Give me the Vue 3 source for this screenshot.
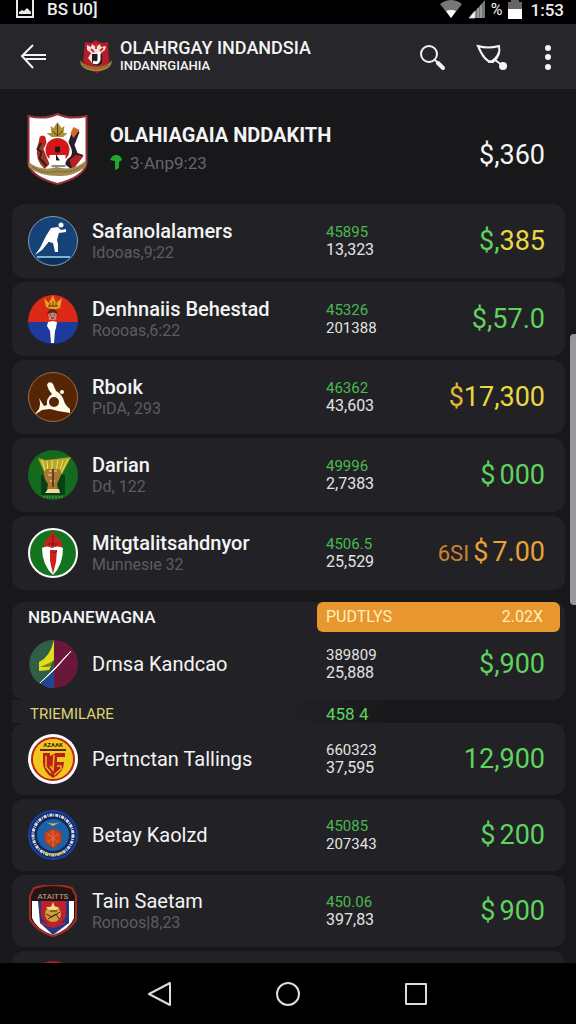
<script setup>
import { ref } from "vue";

const clubs = ref([
  { icon: "skater", name: "Safanolalamers", sub: "Idooas,9;22", top: "45895", bottom: "13,323", symbol: "$,", symbolTone: "green", value: "385", tone: "yellow" },
  { icon: "crown", name: "Denhnaiis Behestad", sub: "Roooas,6:22", top: "45326", bottom: "201388", symbol: "$,", value: "57.0", tone: "green" },
  { icon: "knot", name: "Rboık", sub: "PıDA, 293", top: "46362", bottom: "43,603", symbol: "$", symbolTone: "gold", value: "17,300", tone: "yellow" },
  { icon: "trophy", name: "Darian", sub: "Dd, 122", top: "49996", bottom: "2,7383", symbol: "$", value: "000", tone: "green", spaced: true },
  { icon: "torch", name: "Mitgtalitsahdnyor", sub: "Munnesıe 32", top: "4506.5", bottom: "25,529", prefix: "6SI", symbol: "$", value: "7.00", tone: "orange", spaced: true },
]);

const featured = ref({ icon: "split", name: "Dɾnsa Kandcao", top: "389809", plainTop: true, bottom: "25,888", symbol: "$,", value: "900", tone: "green" });

const league = ref([
  { icon: "shieldRound", crestText: "AZAAK", name: "Pertnctan Tallings", top: "660323", plainTop: true, bottom: "37,595", value: "12,900", tone: "green" },
  { icon: "seal", name: "Betay Kaolzd", top: "45085", bottom: "207343", symbol: "$", value: "200", tone: "green", spaced: true },
  { icon: "badge", crestText: "ATAITTS", name: "Tain Saetam", sub: "Ronoos|8,23", top: "450.06", bottom: "397,83", symbol: "$", value: "900", tone: "green", spaced: true },
]);

const groups = [
  { id: "clubs", rows: clubs.value },
  { id: "featured", rows: [featured.value] },
  { id: "league", rows: league.value },
];
</script>

<template>
  <div class="screen">
    <svg class="sprite" aria-hidden="true">
      <symbol id="skater" viewBox="0 0 50 50">
        <circle cx="25" cy="25" r="24.5" fill="#154378" stroke="#8299b4" />
        <path d="M10 41h31l-4 4q-12 7-23 0z" fill="#0d315f" />
        <path d="M9 41h33" stroke="#a9dcf4" stroke-width="1.5" />
        <circle cx="33" cy="9" r="2.5" fill="#fff" />
        <path d="M23 12l7-1 3 3 5-1v3l-7 1-2 7 1 4v8h-3l-2-9-4-1-7 8-7 5 5-7 6-12z" fill="#fff" />
        <path d="M21 26l-8 11" stroke="#154378" />
      </symbol>
      <symbol id="crown" viewBox="0 0 50 50">
        <path d="M0 28a25 27 0 0 1 50 0z" fill="#de2817" />
        <path d="M0 28h50a25 22 0 0 1-50 0z" fill="#1d3b9c" />
        <path d="M18 13l-2-9 5 5 4-8 3 8 6-5-2 10-7 2z" fill="#e3a51e" />
        <path d="M20 12h10M22 9v4M25 7v6M28 9v4" stroke="#77320f" />
        <circle cx="24.5" cy="20" r="5" fill="#5b241b" />
        <path d="M20 20q5-3 9 0l-1 6h-7z" fill="#cb8067" />
        <path d="M22 21h1M26 21h1M23 24h3" stroke="#541c16" />
        <path d="M20 28l5-1 4 1-1 6-1 3-1 12h-3l-1-12-3-5z" fill="#fff" />
      </symbol>
      <symbol id="knot" viewBox="0 0 50 50">
        <circle cx="25" cy="25" r="24.5" fill="#562506" stroke="#a36c38" />
        <path d="M20 11q3-2 5 1l3 7q6 3 8 10 1 4 6 8v4l-12-2-8-2-8 1-6 4H7l4-5q2-5 0-11l5 8 3-1q-1-7 5-11-4-4-5-9z" fill="#fff9e9" />
        <circle cx="26" cy="30" r="5" fill="#562506" />
        <circle cx="34" cy="20" r="2" fill="#fff9e9" />
      </symbol>
      <symbol id="trophy" viewBox="0 0 50 50">
        <circle cx="25" cy="25" r="25" fill="#146b1d" />
        <path d="M13 25h24v20H13z" fill="#073f14" />
        <path d="M10 8l7 2 11-1 15-2-9 17H17z" fill="#b9a52a" />
        <path d="M14 10l4 13M19 11l1 12M24 10v13M30 10l-2 13M35 10l-4 13M40 9l-7 14" stroke="#eee774" />
        <path d="M18 19h12q4 0 3 6l-4 9 1 6h-11l1-6q-7-8-2-15z" fill="#a67831" />
        <path d="M21 21h8M20 25h5M22 31h5" stroke="#f4d9a2" />
        <path d="M25 19v18" stroke="#60401c" stroke-width="2" />
        <path d="M20 39h11l1 4H17z" fill="#f4d9a2" />
        <path d="M15 47h20" stroke="#63a451" stroke-dasharray="2 1" />
      </symbol>
      <symbol id="torch" viewBox="0 0 50 50">
        <circle cx="25" cy="25" r="24" fill="#14731e" stroke="#fff" stroke-width="2" />
        <path d="M25 2q0 5 5 8 5 4 4 10H16q-1-7 5-11z" fill="#c7211c" />
        <path d="M14 20q5-3 10 0 6-3 11 0 0 17-10 27-11-10-11-27z" fill="#fff" />
        <path d="M22 22h7l-1 12-3 12-3-13z" fill="#ce211c" />
        <path d="M25 6v12M20 16h10M24 23l2 2 3-2" stroke="#7c1514" fill="none" />
      </symbol>
      <symbol id="split" viewBox="0 0 50 50">
        <path d="M26 1A24 24 0 0 1 26 49z" fill="#6b173c" />
        <path d="M26 1A24 24 0 0 0 12 45L26 31z" fill="#315e47" />
        <path d="M12 44l14-14v19q-7 1-14-5z" fill="#22478e" />
        <path d="M26 1v20l-6 5 3 1-2 4-10 1V23q11-5 15-22z" fill="#e3dc1b" />
        <path d="M12 28l14-6-5 6z" fill="#778718" />
        <path d="M43 12L26 30 12 44l16-15z" fill="#fff" stroke="#fff" />
      </symbol>
      <symbol id="shieldRound" viewBox="0 0 50 50">
        <ellipse cx="25" cy="25" rx="25" ry="25" fill="#fff" />
        <circle cx="25" cy="25" r="21" fill="#f2c61c" stroke="#b82719" stroke-width="2" />
        <path d="M12 16h26" stroke="#592815" stroke-width="2" />
        <path d="M15 19h7v3l6-3h9v4h-8v5h7q0 10-11 16-10-6-10-16z" fill="#b52118" />
        <path d="M18 22v11l5 6M22 32l3 4 1-15M29 32h4v3l-7 6" stroke="#f2b51c" stroke-width="1.5" fill="none" />
      </symbol>
      <symbol id="seal" viewBox="0 0 50 50">
        <circle cx="25" cy="25" r="24" fill="#142b67" stroke="#19409c" stroke-width="2" />
        <circle cx="25" cy="25" r="20" fill="none" stroke="#d6dce3" stroke-width="3" stroke-dasharray="3 1 1 1" />
        <circle cx="25" cy="25" r="17" fill="#1c61a8" stroke="#132758" stroke-width="2" />
        <path d="M18 12q7 3 14 0l-7 4z" fill="#d4bd61" />
        <path d="M14 41q11 7 23 0" stroke="#c8b55e" stroke-width="2" fill="none" />
        <path d="M25 16v4M17 23q8-7 16 0v9l-8 6-8-6z" stroke="#a9391b" fill="#c84420" />
        <path d="M25 20v17M20 24l10 8M30 24l-10 8" stroke="#e97132" />
      </symbol>
      <symbol id="badge" viewBox="0 0 50 52">
        <path d="M6 3q19-6 38 0l4 8v23q-5 11-23 17Q7 45 2 34V11z" fill="#251414" stroke="#a22c21" stroke-width="2" />
        <path d="M4 16h42v17q-4 11-21 17Q8 44 4 33z" fill="#fff" />
        <path d="M10 16h31v22L25 50 12 38z" fill="#263687" />
        <path d="M13 16h25v15q-3 8-13 11-9-4-12-11z" fill="#bc202a" />
        <circle cx="25" cy="29" r="8" fill="#cda03a" />
        <path d="M25 17l2 5h4l-3 3h-7l-3-3h5z" fill="#f0da87" />
        <path d="M18 29l6 3 8-5M20 34l8-5 3 5M22 26h7" stroke="#3d2819" fill="none" />
        <path d="M13 38l12 4 12-4" stroke="#bc202a" stroke-width="2" fill="none" />
      </symbol>
      <symbol id="crest" viewBox="0 0 60 72">
        <path d="M1 3q17 4 29-2 12 6 29 2v48q-3 13-29 20Q4 64 1 51z" fill="#fff" stroke="#96313a" stroke-width="2" />
        <path d="M23 13l3 2 4-6 4 6 3-2-1 7h4l-4 4H24l-5-4h5z" fill="#ae9137" />
        <path d="M25 18l5 5 5-5M30 11v12" stroke="#533d1c" fill="none" />
        <circle cx="30" cy="37" r="12" fill="#d4151a" />
        <path d="M12 26q6-6 7 4l-3 6 6 15-5 5q-10-9-7-23z" fill="#9d3426" />
        <path d="M14 30l-4 6 4 3-2 6 7 8" stroke="#351e18" stroke-width="2" fill="none" />
        <path d="M12 24q3-3 6 0v5h-6z" fill="#d4151a" />
        <path d="M44 20l3-5 5 4-5 13 3 8 6 2-11 15-8-6 3-5q6-3 4-10l-3-7z" fill="#262026" />
        <path d="M43 20l3-6 6 3-6 8z" fill="#d2682b" />
        <path d="M42 47l6-5 8 1-11 14z" fill="#b62024" />
        <path d="M22 42h16v12H22z" fill="#fff" />
        <path d="M28 34h4v5h-4zM29 42v5h3M24 53h14" stroke="#251717" fill="#251717" />
        <path d="M1 49q13 10 28 5 17 5 30-7l-1 7q-13 10-27 9Q11 63 1 54z" fill="#a08a4d" />
        <path d="M5 54q13 8 24 4 14 3 26-5" stroke="#67582e" stroke-dasharray="2 1" fill="none" />
      </symbol>
      <symbol id="miniCrest" viewBox="0 0 34 36">
        <path d="M6 3l6 1 3-2 2-1 3 2 3 1 6-1 1 20q-3 8-12 11Q7 31 4 22z" fill="#b51c25" />
        <path d="M8 6l4 2 1-3 4 3 4-3 1 3 5-1-1 4-4 3 1 6-3 4h-7l-4-5 3-5-4-3z" fill="#f3dddd" />
        <path d="M12 10l3 3M24 9l-3 3M17 5v5" stroke="#d52e2e" stroke-width="2" />
        <path d="M13 15h10v9q-5 5-10 0z" fill="#24191c" />
        <path d="M20 13v8q-1 4-6 2" stroke="#fff" stroke-width="3" fill="none" />
        <path d="M1 21q5 7 16 7t16-7l-1 5q-4 6-15 6T2 26z" fill="#a2803c" />
        <path d="M4 26q12 7 26 0" stroke="#67431f" stroke-dasharray="2 1" fill="none" />
      </symbol>
    </svg>

    <div class="status-bar">
      <svg class="status-photo" viewBox="0 0 18 20" aria-hidden="true">
        <path d="M1 0v17h16V0" fill="none" stroke="#e8e8e8" stroke-width="2" />
        <path d="M3 14v-2l3-2 2 1 3-3 4 4v2z" fill="#e8e8e8" />
      </svg>
      <span class="status-text">BS U0]</span>
      <svg class="status-wifi" viewBox="0 0 24 20" aria-hidden="true">
        <path d="M1 4q11-8 22 0L12 18z" fill="#777" />
        <path d="M7 11q5-2 10 0l-5 7z" fill="#fff" />
      </svg>
      <svg class="status-signal" viewBox="0 0 18 20" aria-hidden="true">
        <path d="M17 0v18H1z" fill="#777" />
        <path d="M7 11v7H1zM10 8v10M13 5v13" fill="#fff" stroke="#bbb" />
      </svg>
      <span class="status-rate">%</span>
      <svg class="status-battery" viewBox="0 0 14 20" aria-hidden="true">
        <path d="M3 0h8v2h3v7H0V2h3z" fill="#666" />
        <path d="M0 9h14v10H0z" fill="#fff" />
      </svg>
      <span class="status-time">1:53</span>
    </div>

    <header class="app-bar">
      <button class="icon-button back" aria-label="Back">
        <svg viewBox="0 0 28 28">
          <path d="M13 2L2 13l11 12M3 12h23M6 16h20" />
        </svg>
      </button>
      <svg class="app-logo" aria-hidden="true"><use href="#miniCrest" /></svg>
      <div class="app-title">
        <h1>OLAHRGAY INDANDSIA</h1>
        <p>INDANRGIAHIA</p>
      </div>
      <button class="icon-button" aria-label="Search">
        <svg viewBox="0 0 28 28">
          <circle cx="11" cy="11" r="8" />
          <path d="M17 17l8 8" />
          <path d="M20 20l5 5" class="thick" />
        </svg>
      </button>
      <button class="icon-button filter" aria-label="Filter">
        <svg viewBox="0 0 32 28">
          <path d="M2 3q10 3 21 0 2 10-6 16-8 1-15-16zM12 19q8-1 11-10M19 17l7 5" />
          <circle cx="27" cy="23" r="2" class="thick" />
        </svg>
      </button>
      <button class="icon-button more" aria-label="More">
        <svg viewBox="0 0 8 28">
          <circle cx="4" cy="5" r="3" class="dot" />
          <circle cx="4" cy="14" r="3" class="dot" />
          <circle cx="4" cy="24" r="3" class="dot" />
        </svg>
      </button>
    </header>

    <main class="content">
      <section class="profile">
        <svg class="profile-crest" aria-hidden="true"><use href="#crest" /></svg>
        <div class="profile-text">
          <h2>OLAHIAGAIA NDDAKITH</h2>
          <p>
            <svg viewBox="0 0 12 16" aria-hidden="true">
              <path d="M0 5q2-5 6-5 5 0 6 5L9 7v6l-4 2V6z" fill="#20a82e" />
            </svg>
            3·Anp9:23
          </p>
        </div>
        <strong class="profile-amount">$,360</strong>
      </section>

      <template v-for="group in groups" :key="group.id">
        <div v-if="group.id === 'league'" class="divider">
          <h3>TRIEMILARE</h3>
          <span>458 4</span>
        </div>
        <section :class="['group', group.id]">
          <div v-if="group.id === 'featured'" class="group-head">
            <h3>NBDANEWAGNA</h3>
            <div class="points">
              <span>PUDTLYS</span>
              <span>2.02X</span>
            </div>
          </div>
          <ul>
            <li v-for="row in group.rows" :key="row.name" class="row">
              <svg class="row-icon" viewBox="0 0 50 52" aria-hidden="true">
                <use :href="'#' + row.icon" />
                <text v-if="row.crestText" x="25" y="14" text-anchor="middle" :class="row.icon">{{ row.crestText }}</text>
              </svg>
              <div class="row-text">
                <p class="name">{{ row.name }}</p>
                <p v-if="row.sub" class="sub">{{ row.sub }}</p>
              </div>
              <div class="row-numbers">
                <div class="stats">
                  <p :class="row.plainTop ? 'plain' : 'green'">{{ row.top }}</p>
                  <p class="plain" :class="{ large: row.bottom.includes(',') }">{{ row.bottom }}</p>
                </div>
                <div class="amount" :class="[row.tone, { spaced: row.spaced }]">
                  <span v-if="row.prefix" class="prefix">{{ row.prefix }}</span>
                  <span v-if="row.symbol" :class="row.symbolTone">{{ row.symbol }}</span>
                  <span>{{ row.value }}</span>
                </div>
              </div>
            </li>
          </ul>
        </section>
      </template>
      <div class="next-card">
        <span class="next-icon"></span>
      </div>
      <div class="scrollbar"></div>
    </main>

    <nav class="nav-bar">
      <button aria-label="Back">
        <svg viewBox="0 0 26 26"><path d="M23 2v22L2 13z" /></svg>
      </button>
      <button aria-label="Home">
        <svg viewBox="0 0 26 26"><circle cx="13" cy="13" r="11" /></svg>
      </button>
      <button aria-label="Recent apps">
        <svg viewBox="0 0 26 26"><path d="M3 3h20v20H3z" /></svg>
      </button>
    </nav>
  </div>
</template>

<style>
body {
  margin: 0;
  background: #18181b;
}
</style>

<style scoped>
.screen {
  display: flex;
  flex-direction: column;
  height: 100vh;
  background: #18181b;
  color: #f4f4f4;
  font-family: Roboto, "Liberation Sans", sans-serif;
}

.sprite {
  position: absolute;
  width: 0;
  height: 0;
}

h1, h2, h3, p, ul {
  margin: 0;
  padding: 0;
}

ul {
  list-style: none;
}

button {
  border: 0;
  padding: 0;
  background: none;
  cursor: pointer;
}

svg {
  display: block;
  flex: none;
}

.status-bar {
  display: flex;
  align-items: flex-start;
  flex: none;
  height: 24px;
  padding: 0 12px 0 16px;
  background: #000;
  color: #eee;
  overflow: hidden;
}

.status-photo {
  width: 18px;
  height: 20px;
}

.status-text {
  flex: 1;
  margin-left: 13px;
  font-size: 17px;
  font-weight: 500;
  line-height: 18px;
}

.status-wifi {
  width: 24px;
  height: 20px;
}

.status-signal {
  width: 18px;
  height: 20px;
  margin: 0 5px;
}

.status-rate {
  font-size: 16px;
  line-height: 20px;
}

.status-battery {
  width: 14px;
  height: 20px;
  margin: 0 9px 0 5px;
}

.status-time {
  font-size: 17px;
  font-weight: 500;
  line-height: 20px;
}

.app-bar {
  display: flex;
  align-items: center;
  flex: none;
  height: 65px;
  padding: 0 24px 0 20px;
  background: #26262b;
}

.icon-button svg {
  width: 28px;
  height: 28px;
  fill: none;
  stroke: #f4f4f4;
  stroke-width: 2;
}

.icon-button .thick {
  stroke-width: 4;
  stroke-linecap: round;
}

.icon-button .dot {
  fill: #f4f4f4;
  stroke: none;
}

.filter {
  margin: 0 36px 0 30px;
}

.filter svg {
  width: 32px;
}

.more svg {
  width: 8px;
}

.app-logo {
  width: 34px;
  height: 36px;
  margin: 0 7px 0 31px;
}

.app-title {
  flex: 1;
}

.app-title h1 {
  font-size: 18px;
  font-weight: 500;
  line-height: 18px;
}

.app-title p {
  font-size: 13px;
  font-weight: 500;
  line-height: 18px;
}

.content {
  position: relative;
  flex: 1;
  min-height: 0;
  padding: 0 11px 0 12px;
  overflow: hidden;
}

.profile {
  display: flex;
  align-items: center;
  height: 115px;
  padding: 4px 20px 0 15px;
  box-sizing: border-box;
}

.profile-crest {
  width: 61px;
  height: 72px;
}

.profile-text {
  flex: 1;
  margin-left: 22px;
}

.profile h2 {
  font-size: 20px;
  font-weight: 700;
  line-height: 28px;
}

.profile p {
  display: flex;
  align-items: center;
  gap: 8px;
  color: #66666a;
  font-size: 17px;
  line-height: 28px;
}

.profile p svg {
  width: 12px;
  height: 16px;
}

.profile-amount {
  padding-top: 12px;
  font-size: 27px;
  font-weight: 400;
}

.group ul {
  display: flex;
  flex-direction: column;
  gap: 4px;
}

.row {
  display: grid;
  grid-template-columns: 50px minmax(0, 1fr) 219px;
  align-items: center;
  column-gap: 14px;
  height: 72px;
  padding: 0 20px 0 16px;
  border-radius: 12px;
  background: #222226;
}

.clubs .row {
  height: 74px;
}

.row-icon {
  width: 50px;
  height: 52px;
}

.row-icon text.shieldRound {
  fill: #3e2713;
  font-size: 6px;
  font-weight: 700;
}

.row-icon text.badge {
  fill: #c6ae99;
  font-size: 8px;
}

.name {
  font-size: 20px;
  font-weight: 500;
  line-height: 24px;
  white-space: nowrap;
}

.league .name,
.featured .name {
  font-weight: 400;
}

.sub {
  color: #5c5c60;
  font-size: 16px;
  line-height: 20px;
}

.row-numbers {
  display: flex;
  align-items: center;
  justify-content: space-between;
}

.stats {
  font-size: 15px;
  line-height: 18px;
}

.stats .large {
  font-size: 16px;
}

.plain {
  color: #e2e2e2;
}

.amount {
  display: flex;
  align-items: baseline;
  font-size: 27px;
  line-height: 32px;
}

.amount.spaced {
  gap: 4px;
}

.green {
  color: #5fd35d;
}

.stats .green {
  color: #48b950;
}

.yellow {
  color: #e9d840;
}

.gold {
  color: #e0b834;
}

.orange {
  color: #e9a035;
}

.prefix {
  color: #c9822f;
  font-size: 22px;
}

.featured {
  margin-top: 12px;
  border-radius: 12px;
  background: #222226;
}

.featured .row {
  height: 64px;
  padding-bottom: 4px;
  background: none;
}

.group-head {
  display: flex;
  align-items: center;
  justify-content: space-between;
  padding: 0 5px 0 16px;
}

.group-head h3 {
  font-size: 17px;
  font-weight: 500;
}

.points {
  display: flex;
  justify-content: space-between;
  width: 217px;
  padding: 0 17px 0 9px;
  border-radius: 6px;
  background: #e8962e;
  color: #fff0bd;
  font-size: 16px;
  line-height: 30px;
}

.divider {
  display: grid;
  grid-template-columns: minmax(0, 1fr) 219px;
  align-items: center;
  height: 23px;
  padding: 0 20px 0 18px;
  background: linear-gradient(90deg, #222226 50%, #18181b 70%);
  color: #5fd35d;
  font-size: 17px;
  line-height: 28px;
}

.divider h3 {
  color: #ded372;
  font-size: 15px;
  font-weight: 400;
}

.next-card {
  display: flex;
  height: 72px;
  margin-top: 4px;
  padding-left: 16px;
  border-radius: 12px;
  background: #222226;
}

.next-icon {
  width: 50px;
  height: 50px;
  margin-top: 10px;
  border-radius: 50%;
  background: #a81d1d;
}

.scrollbar {
  position: absolute;
  top: 28%;
  right: 0;
  width: 6px;
  height: 31%;
  border-radius: 4px 0 0 4px;
  background: #98989b;
}

.nav-bar {
  display: flex;
  align-items: center;
  justify-content: center;
  gap: 102px;
  flex: none;
  height: 61px;
  background: #000;
}

.nav-bar svg {
  width: 26px;
  height: 26px;
  fill: none;
  stroke: #dcdcd8;
  stroke-width: 2;
  stroke-linejoin: round;
}
</style>
